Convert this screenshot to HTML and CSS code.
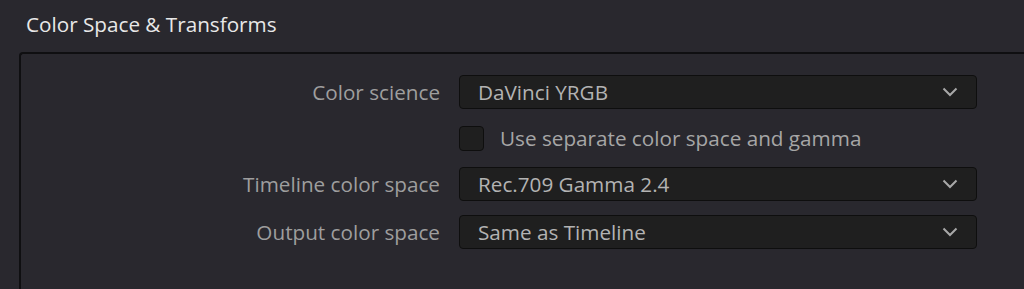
FILE: index.html
```html
<!DOCTYPE html>
<html lang="en">
<head>
    <meta charset="UTF-8">
    <meta name="viewport" content="width=device-width, initial-scale=1.0">
    <title>Color Space &amp; Transforms</title>
    <link rel="stylesheet" href="styles.css">
</head>
<body>
    <div class="section">
        <!-- Section heading -->
        <h2 class="section-title">Color Space &amp; Transforms</h2>

        <!-- Settings panel -->
        <div class="panel">
            <div class="form-grid">
                <label class="field-label">Color science</label>
                <div class="select">
                    <span class="select-value">DaVinci YRGB</span>
                    <svg class="chevron" width="16" height="10" viewBox="0 0 16 10"><path d="M1.5 1.5 L8 8 L14.5 1.5" /></svg>
                </div>

                <div class="spacer"></div>
                <div class="check-row">
                    <span class="checkbox"></span>
                    <span class="check-label">Use separate color space and gamma</span>
                </div>

                <label class="field-label">Timeline color space</label>
                <div class="select">
                    <span class="select-value">Rec.709 Gamma 2.4</span>
                    <svg class="chevron" width="16" height="10" viewBox="0 0 16 10"><path d="M1.5 1.5 L8 8 L14.5 1.5" /></svg>
                </div>

                <label class="field-label">Output color space</label>
                <div class="select">
                    <span class="select-value">Same as Timeline</span>
                    <svg class="chevron" width="16" height="10" viewBox="0 0 16 10"><path d="M1.5 1.5 L8 8 L14.5 1.5" /></svg>
                </div>
            </div>
        </div>
    </div>
</body>
</html>
```

FILE: styles.css
```css
body {
    font-family: "Open Sans", "Noto Sans", sans-serif;
    margin: 0;
    padding: 0;
    background-color: #29282e;
    height: 100vh;
    overflow: hidden;
}
.section {
    padding-left: 19px;
}
.section-title {
    margin: 0;
    height: 52px;
    padding-left: 7px;
    padding-top: 10px;
    box-sizing: border-box;
    font-size: 20.7px;
    font-weight: normal;
    line-height: 28px;
    color: #e8e8e8;
}
.panel {
    border: 2px solid #0f0f11;
    border-right: none;
    border-bottom: none;
    border-top-left-radius: 4px;
    background-color: #29282e;
    height: 237px;
    padding-top: 21px;
    box-sizing: border-box;
}
.form-grid {
    display: grid;
    grid-template-columns: 419px 518px;
    grid-template-rows: 34px 30px 34px 34px;
    column-gap: 19px;
    row-gap: 14px;
    align-items: center;
}
.field-label {
    text-align: right;
    font-size: 20.7px;
    color: #9e9e9e;
}
.select {
    height: 34px;
    box-sizing: border-box;
    background-color: #1f1f1f;
    border: 1px solid #0e0e0e;
    border-radius: 4px;
    display: flex;
    align-items: center;
    justify-content: space-between;
    padding: 0 18px 0 18px;
}
.select-value {
    font-size: 20.7px;
    color: #b3b3b3;
}
.chevron path {
    fill: none;
    stroke: #a8a8a8;
    stroke-width: 2;
}
.check-row {
    display: flex;
    align-items: center;
    gap: 16px;
}
.checkbox {
    width: 25px;
    height: 25px;
    box-sizing: border-box;
    background-color: #1f1f1f;
    border: 1px solid #0e0e0e;
    border-radius: 4px;
}
.check-label {
    font-size: 20.7px;
    color: #a6a6a6;
}
```
